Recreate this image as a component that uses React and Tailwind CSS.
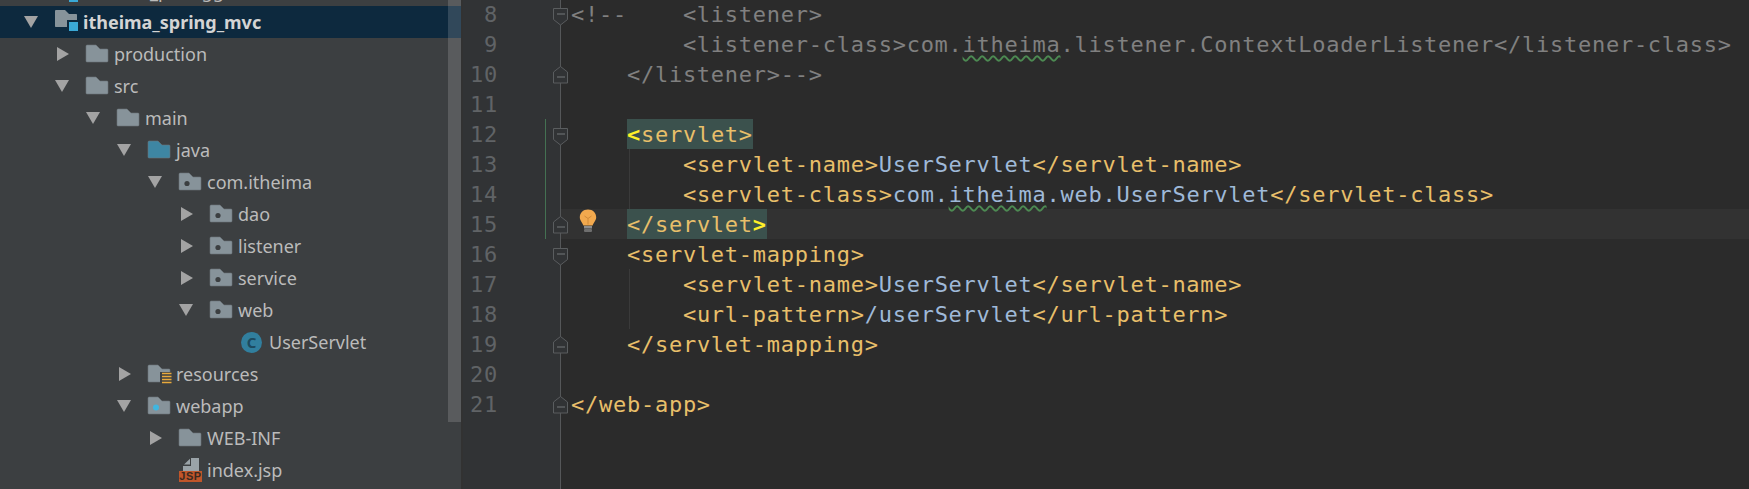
import React from 'react';

const folderPath = 'M0 1.2C0 .5.5 0 1.2 0H10l4 4h7c.6 0 1 .4 1 1v11c0 .6-.4 1-1 1H1c-.6 0-1-.4-1-1z';

const Folder = ({ color = '#87939a', children }) => (
  <svg width="23" height="18" viewBox="0 0 23 18" className="block overflow-visible">
    <path d={folderPath} fill={color} stroke="#6b7479" strokeWidth="0.6" />
    {children}
  </svg>
);

const Icon = ({ type }) => {
  if (type === 'root') {
    return (
      <svg width="24" height="22" viewBox="0 0 24 22" className="block overflow-visible -mt-[2px]">
        <path d={folderPath} fill="#87939a" />
        <rect x="12" y="10" width="12" height="12" fill="#0d293e" />
        <rect x="14" y="12" width="9" height="9" fill="#3aa9d6" />
      </svg>
    );
  }
  if (type === 'source') return <Folder color="#3e86a3" />;
  if (type === 'package') return <Folder><circle cx="8" cy="10.5" r="2.6" fill="#3c3f41" /></Folder>;
  if (type === 'web') return <Folder><circle cx="8" cy="10.5" r="3" fill="#40b6e0" /></Folder>;
  if (type === 'resources') {
    return (
      <Folder>
        <rect x="12" y="7" width="12" height="13" fill="#3c3f41" />
        <path d="M14 8.5h9.5M14 11.5h9.5M14 14.5h9.5M14 17.5h9.5" stroke="#e8a93c" strokeWidth="1.7" />
      </Folder>
    );
  }
  if (type === 'class') {
    return (
      <span className="flex h-[21px] w-[21px] items-center justify-center rounded-full bg-[#317f9e] text-[15px] font-bold text-[#1d4a5e]">C</span>
    );
  }
  if (type === 'jsp') {
    return (
      <span className="flex w-[23px] flex-col items-center">
        <svg width="16" height="13" viewBox="0 0 16 13" className="block">
          <path d="M9 0h7v13H0V8h8V0zM1 6.5 7 .8v5.700z" fill="#9aa3a8" />
        </svg>
        <span className="flex h-[11px] w-[23px] items-center justify-center bg-[#c0562a] text-[11px] font-bold tracking-[0.5px] text-[#3b2a20] [font-family:'Liberation_Sans',sans-serif]">JSP</span>
      </span>
    );
  }
  return <Folder />;
};

const Arrow = ({ dir }) => {
  if (dir === 'down') {
    return (
      <svg width="14" height="12" viewBox="0 0 14 12" className="block"><path d="M0 0h14L7 12z" fill="#a3a3a3" /></svg>
    );
  }
  if (dir === 'right') {
    return (
      <svg width="12" height="14" viewBox="0 0 12 14" className="ml-[2px] block"><path d="M0 0l12 7L0 14z" fill="#a3a3a3" /></svg>
    );
  }
  return null;
};

const tree = [
  { level: 1, arrow: 'right', icon: 'folder', label: 'production' },
  { level: 1, arrow: 'down', icon: 'folder', label: 'src' },
  { level: 2, arrow: 'down', icon: 'folder', label: 'main' },
  { level: 3, arrow: 'down', icon: 'source', label: 'java' },
  { level: 4, arrow: 'down', icon: 'package', label: 'com.itheima' },
  { level: 5, arrow: 'right', icon: 'package', label: 'dao' },
  { level: 5, arrow: 'right', icon: 'package', label: 'listener' },
  { level: 5, arrow: 'right', icon: 'package', label: 'service' },
  { level: 5, arrow: 'down', icon: 'package', label: 'web' },
  { level: 6, icon: 'class', label: 'UserServlet' },
  { level: 3, arrow: 'right', icon: 'resources', label: 'resources' },
  { level: 3, arrow: 'down', icon: 'web', label: 'webapp' },
  { level: 4, arrow: 'right', icon: 'folder', label: 'WEB-INF' },
  { level: 4, icon: 'jsp', label: 'index.jsp' },
];

const TreeRow = ({ level, arrow, icon, label, selected }) => (
  <div
    className={`flex h-8 items-center ${selected ? 'bg-[#0d293e] font-bold text-[#d4d4d4]' : 'text-[#bbbbbb]'}`}
    style={{ paddingLeft: 24 + level * 31 }}
  >
    <span className="flex w-[31px] shrink-0 items-center"><Arrow dir={arrow} /></span>
    <span className="flex w-[28px] shrink-0 items-center"><Icon type={icon} /></span>
    <span className="whitespace-nowrap">{label}</span>
  </div>
);

const Sidebar = () => (
  <div className="relative h-full w-[463px] shrink-0 overflow-hidden border-r-2 border-[#323232] bg-[#3c3f41] text-[18px] [font-family:'Noto_Sans',sans-serif]">
    {/* row scrolled out of view */}
    <div className="relative h-[6px] overflow-hidden">
      <div className="absolute bottom-[3px] left-[86px] whitespace-nowrap leading-[24px] text-[#bbbbbb]">itheima_pom.gg</div>
      <div className="absolute bottom-[4px] left-[69px] h-[9px] w-[9px] bg-[#3aa9d6]" />
    </div>
    <TreeRow level={0} arrow="down" icon="root" label="itheima_spring_mvc" selected />
    {tree.map((row) => <TreeRow key={row.label} {...row} />)}
    <div className="absolute right-0 top-0 h-[422px] w-[13px] bg-white/15" />
  </div>
);

const c = 'text-[#808080]';
const t = 'text-[#e8bf6a]';
const v = 'text-[#9fb9d8]';
const b = 'font-bold text-[#ffef28]';

const Wavy = ({ children }) => (
  <span className="relative z-10 underline decoration-wavy decoration-[#4c8a52] decoration-[1.5px] underline-offset-[3px]">{children}</span>
);

const Match = ({ children }) => (
  <span className="inline-block h-[30px] bg-[#3b514d] align-top">{children}</span>
);

const lines = [
  { n: 8, fold: 'start', code: <span className={c}>{'<!--    <listener>'}</span> },
  { n: 9, code: <span className={c}>{'        <listener-class>com.'}<Wavy>itheima</Wavy>{'.listener.ContextLoaderListener</listener-class>'}</span> },
  { n: 10, fold: 'end', code: <span className={c}>{'    </listener>-->'}</span> },
  { n: 11, code: null },
  {
    n: 12, fold: 'start', changed: true,
    code: <>{'    '}<Match><span className={b}>{'<'}</span><span className={t}>{'servlet>'}</span></Match></>,
  },
  { n: 13, changed: true, code: <>{'        '}<span className={t}>{'<servlet-name>'}</span><span className={v}>UserServlet</span><span className={t}>{'</servlet-name>'}</span></> },
  { n: 14, changed: true, code: <>{'        '}<span className={t}>{'<servlet-class>'}</span><span className={v}>com.<Wavy>itheima</Wavy>.web.UserServlet</span><span className={t}>{'</servlet-class>'}</span></> },
  {
    n: 15, fold: 'end', changed: true, current: true,
    code: <>{'    '}<Match><span className={t}>{'</servlet'}</span><span className={b}>{'>'}</span></Match></>,
  },
  { n: 16, fold: 'start', code: <>{'    '}<span className={t}>{'<servlet-mapping>'}</span></> },
  { n: 17, code: <>{'        '}<span className={t}>{'<servlet-name>'}</span><span className={v}>UserServlet</span><span className={t}>{'</servlet-name>'}</span></> },
  { n: 18, code: <>{'        '}<span className={t}>{'<url-pattern>'}</span><span className={v}>/userServlet</span><span className={t}>{'</url-pattern>'}</span></> },
  { n: 19, fold: 'end', code: <>{'    '}<span className={t}>{'</servlet-mapping>'}</span></> },
  { n: 20, code: null },
  { n: 21, fold: 'end', code: <span className={t}>{'</web-app>'}</span> },
];

const FoldMark = ({ kind }) => (
  <svg
    width="15" height="18" viewBox="0 0 15 18"
    className={`absolute right-[-8px] z-10 ${kind === 'start' ? 'top-[9px]' : 'top-[7px]'}`}
  >
    <path
      d={kind === 'start' ? 'M.5.5h14v11l-7 5.500-7-5.500z' : 'M7.500.5l7 5.500v11H.5V6z'}
      fill="#313335"
      stroke="#5a5d5f"
    />
    <path d={kind === 'start' ? 'M4 6h8' : 'M4 11h8'} stroke="#6a6d6f" strokeWidth="1.2" />
  </svg>
);

const Bulb = () => (
  <svg width="18" height="24" viewBox="0 0 18 24" className="absolute left-[18px] top-0">
    <path d="M9 .5C4 .5.8 4 .8 8.300c0 3.400 2.700 5.200 3.600 8.200h9.200c.9-3 3.600-4.800 3.600-8.200C17.200 4 14 .5 9 .5z" fill="#f2a94e" />
    <path d="M5.500 7l3.500 2.500L12.500 7M9 9.500v6" stroke="#d08a38" strokeWidth="1" fill="none" />
    <rect x="5" y="17" width="8" height="2.500" fill="#8d8d8d" />
    <rect x="5" y="20" width="8" height="3" rx="1" fill="#6e6e6e" />
  </svg>
);

const App = () => (
  <div className="flex h-[489px] w-[1749px] overflow-hidden bg-[#2b2b2b]">
    <Sidebar />
    <div className="flex h-full flex-1 text-[22px] leading-[32px] tracking-[0.74px] [font-family:'DejaVu_Sans_Mono',monospace]">
      {/* gutter */}
      <div className="relative z-10 h-full w-[97px] shrink-0 bg-[#313335]">
        <div className="-mt-px">
          {lines.map((line) => (
            <div key={line.n} className="relative h-[30px] pr-[62px] text-right text-[#606366]">
              {line.n}
              {line.changed && <div className="absolute bottom-0 right-[14px] top-0 w-px bg-[#447152]" />}
              {line.fold && <FoldMark kind={line.fold} />}
            </div>
          ))}
        </div>
      </div>
      {/* code */}
      <div className="h-full flex-1 border-l border-[#555759]">
        <div className="-mt-px">
          {lines.map((line) => (
            <div key={line.n} className={`relative h-[30px] whitespace-pre pl-[10px] ${line.current ? 'bg-[#323232]' : ''}`}>
              {line.code}
              {line.current && <Bulb />}
              {(line.n === 13 || line.n === 14 || line.n === 17 || line.n === 18) && (
                <div className="absolute bottom-0 left-[68px] top-0 w-px bg-[#3a3a3a]" />
              )}
            </div>
          ))}
        </div>
      </div>
    </div>
  </div>
);

export default App;
